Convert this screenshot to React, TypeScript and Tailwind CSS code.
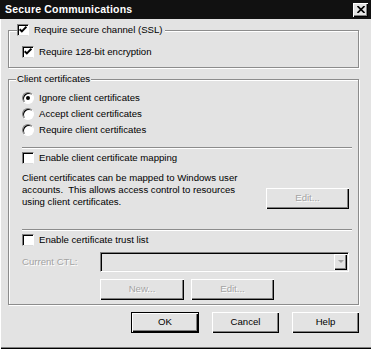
import React from "react";

const raised =
  "shadow-[inset_1px_1px_0_#fff,inset_-1px_-1px_0_#000,inset_-2px_-2px_0_#808080]";
const disabledText = "text-[#a3a3a3] [text-shadow:1px_1px_0_#fff]";

function CheckBox({ checked }: { checked?: boolean }) {
  return (
    <span className="flex h-[12px] w-[12px] shrink-0 items-center justify-center border border-t-[#808080] border-l-[#808080] border-r-white border-b-[#dcdcdc] bg-white shadow-[inset_1px_1px_0_#000]">
      {checked && (
        <svg width="8" height="8" viewBox="0 0 7 7">
          <path d="M0.6 2.8 L2.5 4.7 L6.5 0.7" fill="none" stroke="#000" strokeWidth="1.7" />
        </svg>
      )}
    </span>
  );
}

function Radio({ checked }: { checked?: boolean }) {
  return (
    <span className="flex h-[12px] w-[12px] shrink-0 items-center justify-center rounded-full border border-t-[#808080] border-l-[#808080] border-r-white border-b-white bg-white shadow-[inset_1px_1px_0_#000]">
      {checked && <span className="h-[4px] w-[4px] rounded-full bg-black" />}
    </span>
  );
}

function Button({
  label,
  width,
  disabled,
  isDefault,
}: {
  label: string;
  width: string;
  disabled?: boolean;
  isDefault?: boolean;
}) {
  return (
    <div
      className={`flex h-[21px] shrink-0 items-center justify-center ${width} ${
        isDefault
          ? "border border-black shadow-[inset_1px_1px_0_#fff,inset_-1px_-1px_0_#000,inset_-2px_-2px_0_#808080]"
          : raised
      } ${disabled ? disabledText : "text-black"}`}
    >
      {label}
    </div>
  );
}

export default function App() {
  return (
    <div className="flex h-[349px] w-[371px] flex-col overflow-hidden bg-[#e3e3e3] font-['Liberation_Sans',Arial,sans-serif] text-[9.6px] text-black shadow-[inset_1px_0_0_#fff,inset_0_-1px_0_#000,inset_0_-2px_0_#808080]">
      {/* title bar */}
      <div className="flex h-[19px] shrink-0 items-center justify-between bg-[#111] pl-[5px] pr-[3px]">
        <span className="text-[10.5px] font-bold tracking-[0.2px] text-white">Secure Communications</span>
        <span className={`flex h-[14px] w-[15px] items-center justify-center bg-[#e3e3e3] ${raised}`}>
          <svg width="8" height="7" viewBox="0 0 8 7">
            <path d="M0.5 0 L7.5 7 M7.5 0 L0.5 7" stroke="#000" strokeWidth="1.6" />
          </svg>
        </span>
      </div>

      <div className="flex flex-col pl-[8px] pr-[12px]">
        {/* SSL group */}
        <fieldset className="mt-[5px] border border-[#8c8c8c] pb-[8px] shadow-[inset_1px_1px_0_#fff,1px_1px_0_#fff]">
          <legend className="ml-[8px] flex h-[12px] items-center gap-[5px] bg-[#e3e3e3] pr-[2px]">
            <CheckBox checked />
            <span>Require secure channel (SSL)</span>
          </legend>
          <div className="mt-[9px] flex h-[14px] items-center gap-[5px] pl-[13px]">
            <CheckBox checked />
            <span>Require 128-bit encryption</span>
          </div>
        </fieldset>

        {/* client certificates group */}
        <fieldset className="mt-[5px] border border-[#8c8c8c] pb-[4px] shadow-[inset_1px_1px_0_#fff,1px_1px_0_#fff]">
          <legend className="ml-[7px] flex h-[12px] items-center bg-[#e3e3e3] px-[1px]">
            Client certificates
          </legend>
          <div className="mt-[5px] flex flex-col pl-[13px]">
            <div className="flex h-[16px] items-center gap-[5px]">
              <Radio checked />
              <span>Ignore client certificates</span>
            </div>
            <div className="flex h-[16px] items-center gap-[5px]">
              <Radio />
              <span>Accept client certificates</span>
            </div>
            <div className="flex h-[16px] items-center gap-[5px]">
              <Radio />
              <span>Require client certificates</span>
            </div>
          </div>

          <div className="ml-[13px] mr-[6px] mt-[9px] h-[2px] border-t border-b border-t-[#8c8c8c] border-b-white" />

          <div className="mt-[1px] flex h-[16px] items-center gap-[5px] pl-[13px]">
            <CheckBox />
            <span>Enable client certificate mapping</span>
          </div>

          <div className="mt-[6px] flex items-end pl-[13px] pr-[9px]">
            <p className="leading-[12px]">
              Client certificates can be mapped to Windows user
              <br />
              accounts.&nbsp; This allows access control to resources
              <br />
              using client certificates.
            </p>
            <div className="ml-auto -mb-[1px]">
              <Button label="Edit..." width="w-[83px]" disabled />
            </div>
          </div>

          <div className="ml-[13px] mr-[6px] mt-[21px] h-[2px] border-t border-b border-t-[#8c8c8c] border-b-white" />

          <div className="mt-[1px] flex h-[16px] items-center gap-[5px] pl-[13px]">
            <CheckBox />
            <span>Enable certificate trust list</span>
          </div>

          <div className="mt-[4px] flex h-[20px] items-center pl-[13px] pr-[9px]">
            <span className={`w-[78px] shrink-0 ${disabledText}`}>Current CTL:</span>
            <div className="flex h-[20px] flex-1 justify-end border border-t-[#808080] border-l-[#808080] border-r-white border-b-white p-[1px] shadow-[inset_1px_1px_0_#000,inset_-1px_-1px_0_#dcdcdc]">
              <div className={`flex w-[13px] items-center justify-center ${raised}`}>
                <svg width="6" height="4" viewBox="0 0 6 4">
                  <path d="M0 0 L6 0 L3 3 Z" fill="#a3a3a3" />
                </svg>
              </div>
            </div>
          </div>

          <div className="mt-[7px] flex gap-[7px] pl-[91px]">
            <Button label="New..." width="w-[84px]" disabled />
            <Button label="Edit..." width="w-[83px]" disabled />
          </div>
        </fieldset>

        {/* dialog buttons */}
        <div className="mt-[7px] flex justify-end gap-[13px]">
          <Button label="OK" width="w-[68px]" isDefault />
          <Button label="Cancel" width="w-[67px]" />
          <Button label="Help" width="w-[67px]" />
        </div>
      </div>
    </div>
  );
}
